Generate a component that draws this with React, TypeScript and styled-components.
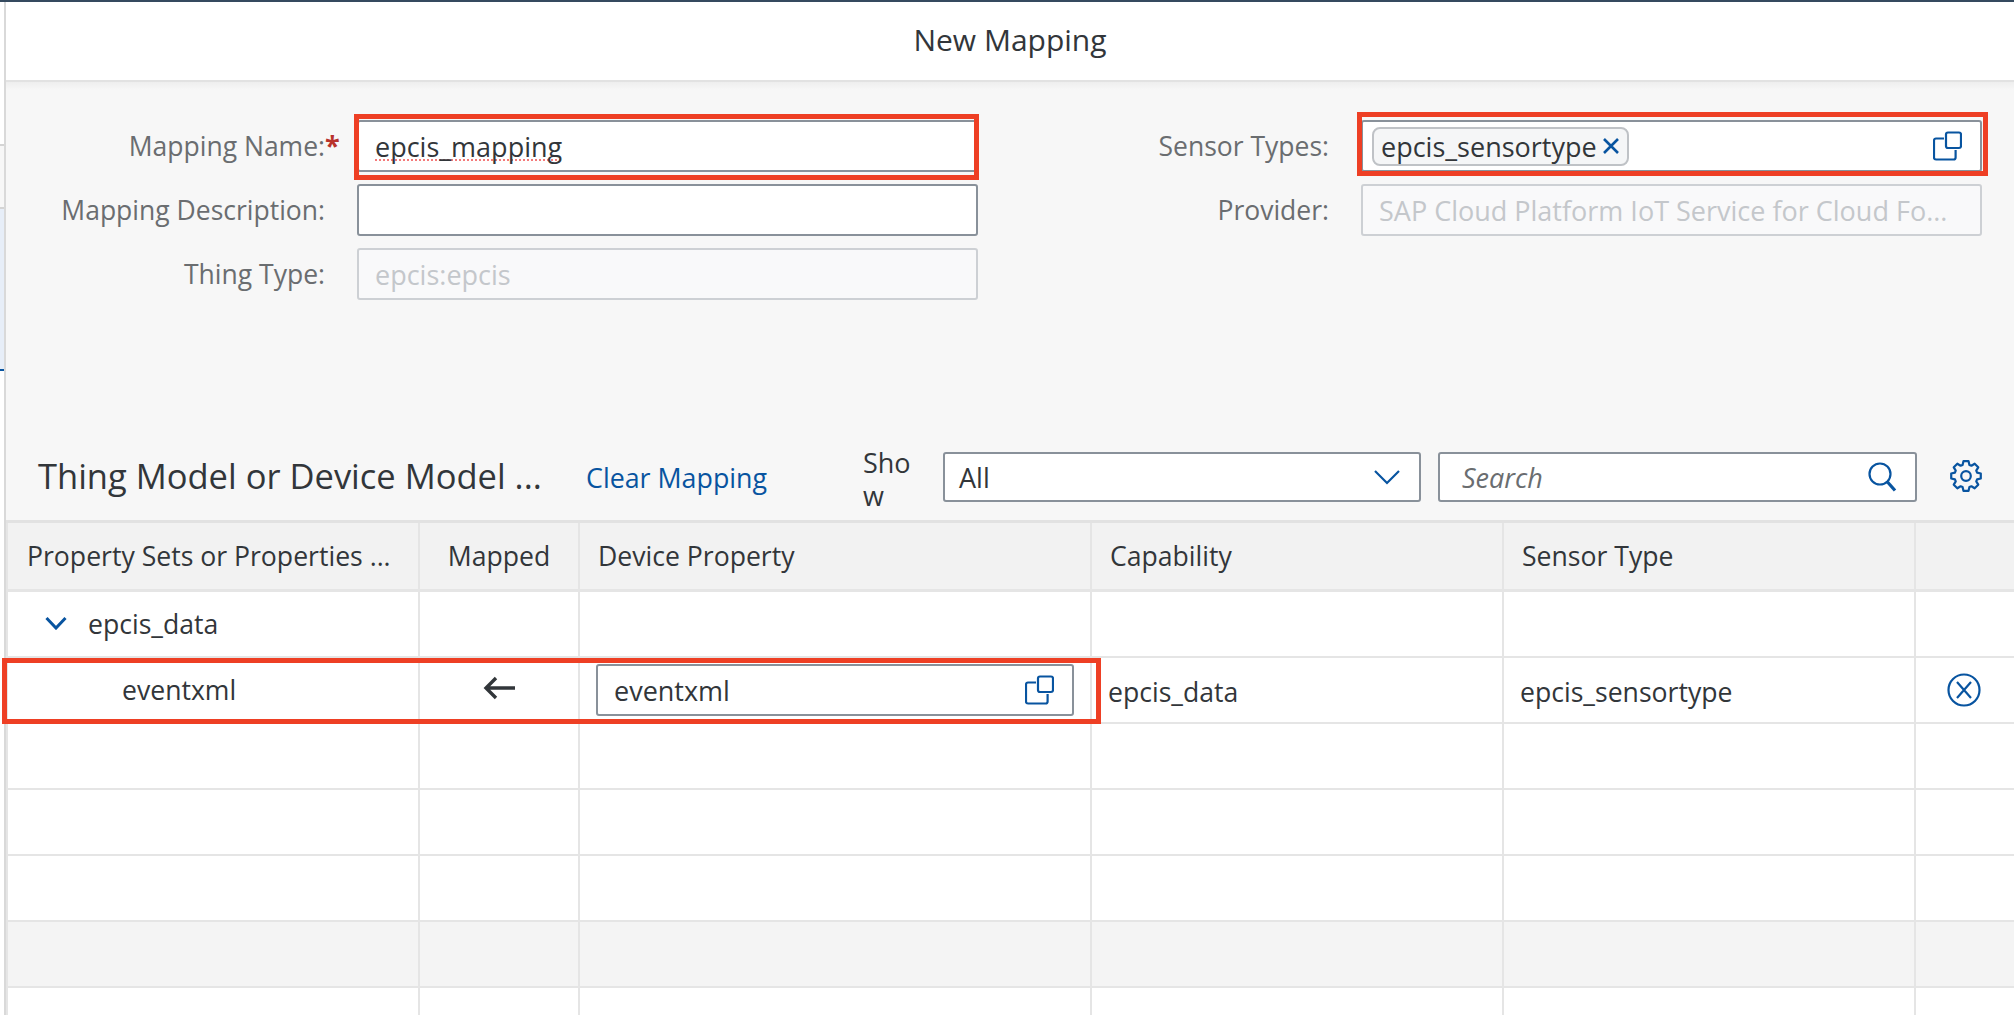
import React from 'react';
import styled, { createGlobalStyle } from 'styled-components';

const GlobalStyle = createGlobalStyle`
  html, body {
    margin: 0;
    padding: 0;
    height: 100%;
    background: #ffffff;
    overflow: hidden;
  }
  body {
    font-family: "Open Sans", "Noto Sans", sans-serif;
    color: #32363a;
  }
`;

const BLUE = '#0854a0';

const Page = styled.div`
  position: relative;
  width: 2014px;
  height: 1015px;
  overflow: hidden;
  background: #ffffff;
  border-top: 2px solid #354a5f;
  box-sizing: border-box;
  display: flex;
`;

/* sliver of the page behind the dialog */
const Backdrop = styled.div`
  width: 4px;
  flex: none;
  display: flex;
  flex-direction: column;
`;

const BackdropBand = styled.div<{ $h: number; $bg: string }>`
  height: ${(p) => p.$h}px;
  flex: none;
  background: ${(p) => p.$bg};
`;

const Dialog = styled.div`
  flex: 1;
  min-width: 0;
  display: flex;
  flex-direction: column;
  border-left: 2px solid #d9d9d9;
`;

const Title = styled.header`
  height: 80px;
  flex: none;
  box-sizing: border-box;
  padding-bottom: 4px;
  display: flex;
  align-items: center;
  justify-content: center;
  font-size: 30px;
  background: #ffffff;
  border-bottom: 2px solid #e2e2e2;
`;

const Content = styled.div`
  flex: 1;
  display: flex;
  flex-direction: column;
  background: linear-gradient(#eeeeee, #f7f7f7 8px);
`;

const Form = styled.div`
  height: 370px;
  flex: none;
  box-sizing: border-box;
  padding-top: 38px;
  display: grid;
  grid-template-columns: 972px 1fr;
`;

const FormColumn = styled.div<{ $label: number; $field: number }>`
  display: grid;
  grid-template-columns: ${(p) => p.$label}px ${(p) => p.$field}px;
  grid-auto-rows: 52px;
  row-gap: 12px;
  column-gap: 32px;
  align-content: start;
`;

const Label = styled.label`
  display: flex;
  justify-content: flex-end;
  align-items: center;
  font-size: 26.5px;
  color: #6a6d70;
  white-space: nowrap;
  position: relative;
`;

const Required = styled.span`
  position: absolute;
  left: 100%;
  top: 6px;
  color: #b8322c;
  font-size: 27px;
  font-weight: 700;
`;

const Field = styled.div<{ $disabled?: boolean }>`
  box-sizing: border-box;
  display: flex;
  align-items: center;
  justify-content: space-between;
  height: 100%;
  padding: 0 16px;
  font-size: 27px;
  white-space: nowrap;
  overflow: hidden;
  border-radius: 3px;
  border: 2px solid ${(p) => (p.$disabled ? '#cdd0d4' : '#89919a')};
  background: ${(p) => (p.$disabled ? '#f9f9fa' : '#ffffff')};
  color: ${(p) => (p.$disabled ? '#c4c7cb' : '#32363a')};
`;

const TokenField = styled(Field)`
  padding: 0 18px 0 9px;
`;

const Misspelled = styled.span`
  text-decoration: underline dotted #f47a7a 2px;
  text-underline-offset: 3px;
  text-decoration-skip-ink: none;
`;

const Token = styled.span`
  display: inline-flex;
  align-items: center;
  gap: 5px;
  height: 39px;
  box-sizing: border-box;
  padding: 0 7px;
  background: #f5f6f7;
  border: 2px solid #bfc2c6;
  border-radius: 8px;
`;

const Toolbar = styled.div`
  height: 71px;
  flex: none;
  display: flex;
  align-items: flex-start;
  box-sizing: border-box;
  padding-left: 32px;
  border-bottom: 3px solid #e2e2e2;
`;

const ToolbarTitle = styled.h2`
  margin: 0;
  width: 548px;
  height: 46px;
  display: flex;
  align-items: center;
  font-size: 34.5px;
  font-weight: 400;
  white-space: nowrap;
`;

const ClearLink = styled.a`
  width: 277px;
  height: 50px;
  display: flex;
  align-items: center;
  font-size: 26.8px;
  color: ${BLUE};
  white-space: nowrap;
`;

const ShowLabel = styled.span`
  width: 50px;
  margin-right: 30px;
  height: 50px;
  margin-top: -6px;
  font-size: 27px;
  line-height: 33px;
  word-break: break-all;
`;

const Control = styled(Field)<{ $width: number; $italic?: boolean; $pad: number }>`
  flex: none;
  width: ${(p) => p.$width}px;
  height: 50px;
  margin-right: 17px;
  padding-left: ${(p) => p.$pad}px;
  font-style: ${(p) => (p.$italic ? 'italic' : 'normal')};
  color: ${(p) => (p.$italic ? '#6a6d70' : '#32363a')};
`;

const GearButton = styled.span`
  display: flex;
  margin: 8px 0 0 16px;
`;

const HeaderRow = styled.div`
  display: grid;
  grid-template-columns: 412px 160px 512px 412px 412px 1fr;
  height: 69px;
  flex: none;
  box-sizing: border-box;
  background: #f2f2f2;
  border-bottom: 3px solid #e5e5e5;
  border-left: 2px solid #e5e5e5;
`;

const Row = styled(HeaderRow)<{ $shaded?: boolean }>`
  height: 66px;
  border-bottom-width: 2px;
  background: ${(p) => (p.$shaded ? '#f4f4f4' : '#ffffff')};
`;

const Cell = styled.div<{ $center?: boolean; $indent?: number; $shift?: number }>`
  display: flex;
  align-items: center;
  justify-content: ${(p) => (p.$center ? 'center' : 'flex-start')};
  box-sizing: border-box;
  padding-left: ${(p) => p.$indent ?? 0}px;
  padding-top: ${(p) => p.$shift ?? 0}px;
  border-right: 2px solid #e5e5e5;
  font-size: 26.6px;
  white-space: nowrap;
  overflow: hidden;

  &:last-child {
    border-right: none;
  }
`;

const TreeChevron = styled.svg`
  flex: none;
  margin-right: 21px;
  margin-top: -2px;
`;

const CellField = styled(Field)`
  width: 478px;
  height: 52px;
  padding-right: 18px;
`;

const MapArrow = styled.svg`
  margin-top: -5px;
`;

/* annotation boxes drawn over the screenshot */
const RedBox = styled.div<{ $x: number; $y: number; $w: number; $h: number }>`
  position: absolute;
  left: ${(p) => p.$x}px;
  top: ${(p) => p.$y - 2}px;
  width: ${(p) => p.$w}px;
  height: ${(p) => p.$h}px;
  box-sizing: border-box;
  border: 5px solid #ee3f24;
  pointer-events: none;
`;

const CopyIcon = () => (
  <svg width={29} height={30} viewBox="0 0 29 30" fill="none" stroke={BLUE} strokeWidth="2.2" style={{ flex: 'none' }}>
    <rect x="13" y="1.5" width="15" height="15.5" rx="2" />
    <path d="M11 7.5H3a2 2 0 0 0-2 2V26.5a2 2 0 0 0 2 2h17.6a2 2 0 0 0 2-2V19" />
  </svg>
);

const TokenClose = () => (
  <svg width={18} height={18} viewBox="0 0 18 18" fill="none" stroke={BLUE} strokeWidth="2.6" style={{ flex: 'none' }}>
    <path d="M2 2l14 14M16 2L2 16" />
  </svg>
);

const SelectChevron = () => (
  <svg width={26} height={16} viewBox="0 0 26 16" fill="none" stroke={BLUE} strokeWidth="2.2" style={{ flex: 'none', marginRight: 3 }}>
    <path d="M1 2l12 12L25 2" />
  </svg>
);

const SearchIcon = () => (
  <svg width={29} height={30} viewBox="0 0 29 30" fill="none" stroke={BLUE} strokeWidth="2.2" style={{ flex: 'none', marginRight: 2 }}>
    <circle cx="12" cy="12" r="10.5" />
    <path d="M19.5 20L27 28.5" strokeWidth="3.2" />
  </svg>
);

const RemoveIcon = () => (
  <svg width={34} height={34} viewBox="0 0 34 34" fill="none" stroke={BLUE} strokeWidth="2.2">
    <circle cx="17" cy="17" r="15.5" />
    <path d="M10 9l14 16M24 9L10 25" />
  </svg>
);

// eight-toothed gear outline
const gearPath = () => {
  const points: string[] = [];
  for (let i = 0; i < 8; i++) {
    const a = (i * Math.PI) / 4 - Math.PI / 2;
    const corners: [number, number][] = [
      [11.6, -0.3],
      [15, -0.17],
      [15, 0.17],
      [11.6, 0.3],
    ];
    corners.forEach(([r, d]) => {
      const x = 16 + r * Math.cos(a + d);
      const y = 16 + r * Math.sin(a + d);
      points.push(`${x.toFixed(2)} ${y.toFixed(2)}`);
    });
  }
  return `M${points.join('L')}Z`;
};

const GearIcon = () => (
  <svg width={32} height={32} viewBox="0 0 32 32" fill="none" stroke={BLUE} strokeWidth="2.2" strokeLinejoin="round">
    <path d={gearPath()} />
    <circle cx="16" cy="16" r="4.8" />
  </svg>
);

const rows = [0, 1, 2, 3, 4, 5, 6];

const App = () => {
  return (
    <Page>
      <GlobalStyle />
      <Backdrop>
        <BackdropBand $h={142} $bg="#ffffff" />
        <BackdropBand $h={2} $bg="#d4d4d4" />
        <BackdropBand $h={61} $bg="#f7f7f7" />
        <BackdropBand $h={2} $bg="#d4d4d4" />
        <BackdropBand $h={160} $bg="#e7eef8" />
        <BackdropBand $h={2} $bg={BLUE} />
      </Backdrop>
      <Dialog>
        <Title>New Mapping</Title>
        <Content>
          <Form>
            <FormColumn $label={319} $field={621}>
              <Label>
                Mapping Name:<Required>*</Required>
              </Label>
              <Field>
                <Misspelled>epcis_mapping</Misspelled>
              </Field>
              <Label>Mapping Description:</Label>
              <Field />
              <Label>Thing Type:</Label>
              <Field $disabled>epcis:epcis</Field>
            </FormColumn>
            <FormColumn $label={351} $field={621}>
              <Label>Sensor Types:</Label>
              <TokenField>
                <Token>
                  epcis_sensortype
                  <TokenClose />
                </Token>
                <CopyIcon />
              </TokenField>
              <Label>Provider:</Label>
              <Field $disabled>SAP Cloud Platform IoT Service for Cloud Fo...</Field>
            </FormColumn>
          </Form>

          <Toolbar>
            <ToolbarTitle>Thing Model or Device Model ...</ToolbarTitle>
            <ClearLink>Clear Mapping</ClearLink>
            <ShowLabel>Show</ShowLabel>
            <Control $width={478} $pad={14}>
              All
              <SelectChevron />
            </Control>
            <Control $width={479} $pad={22} $italic>
              Search
              <SearchIcon />
            </Control>
            <GearButton>
              <GearIcon />
            </GearButton>
          </Toolbar>

          <HeaderRow>
            <Cell $indent={19}>Property Sets or Properties ...</Cell>
            <Cell $center>Mapped</Cell>
            <Cell $indent={18}>Device Property</Cell>
            <Cell $indent={18}>Capability</Cell>
            <Cell $indent={18}>Sensor Type</Cell>
            <Cell />
          </HeaderRow>

          {rows.map((i) => (
            <Row key={i} $shaded={i === 5}>
              {i === 0 && (
                <>
                  <Cell $indent={37}>
                    <TreeChevron width={22} height={14} viewBox="0 0 22 14" fill="none" stroke={BLUE} strokeWidth="3">
                      <path d="M1.5 2L11 12l9.5-10" />
                    </TreeChevron>
                    epcis_data
                  </Cell>
                  <Cell />
                  <Cell />
                  <Cell />
                  <Cell />
                  <Cell />
                </>
              )}
              {i === 1 && (
                <>
                  <Cell $indent={114}>eventxml</Cell>
                  <Cell $center>
                    <MapArrow width={32} height={24} viewBox="0 0 32 24" fill="none" stroke="#32363a" strokeWidth="3.4">
                      <path d="M32 12H3M13 2L3 12l10 10" />
                    </MapArrow>
                  </Cell>
                  <Cell $indent={16}>
                    <CellField>
                      eventxml
                      <CopyIcon />
                    </CellField>
                  </Cell>
                  <Cell $indent={16} $shift={4}>
                    epcis_data
                  </Cell>
                  <Cell $indent={16} $shift={4}>
                    epcis_sensortype
                  </Cell>
                  <Cell $indent={31}>
                    <RemoveIcon />
                  </Cell>
                </>
              )}
              {i > 1 && (
                <>
                  <Cell />
                  <Cell />
                  <Cell />
                  <Cell />
                  <Cell />
                  <Cell />
                </>
              )}
            </Row>
          ))}
        </Content>
      </Dialog>

      <RedBox $x={354} $y={114} $w={625} $h={66} />
      <RedBox $x={1357} $y={112} $w={631} $h={64} />
      <RedBox $x={2} $y={658} $w={1099} $h={66} />
    </Page>
  );
};

export default App;
